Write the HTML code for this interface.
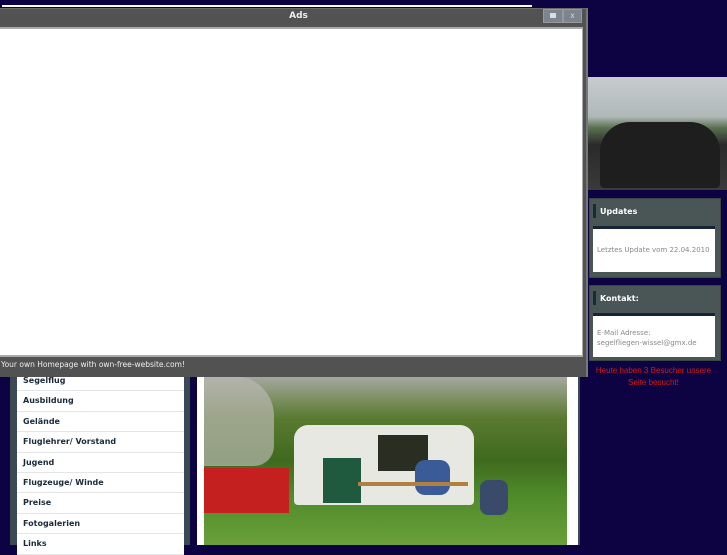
<!DOCTYPE html>
<html><head><meta charset="utf-8"><style>
body{margin:0;width:727px;height:545px;overflow:hidden;background:#0d0342;font-family:"Liberation Sans",sans-serif;position:relative}
.a{position:absolute}
.menu div{height:19.4px;border-bottom:1px solid #e4e6ea;background:#fff;font:bold 8px "DejaVu Sans",sans-serif;color:#1b2a3a;padding-left:6px;line-height:19px}
.box{background:#4a5555;border:1px solid #3a4545}
.hd{color:#fff;font:bold 8px "DejaVu Sans",sans-serif;position:absolute;left:10px;top:8px}
.bar{position:absolute;left:3px;top:5px;width:3px;height:14px;background:#1b2a3a}
.bd{position:absolute;left:3px;right:5px;background:#fff;border-top:3px solid #152536;font:7px "DejaVu Sans",sans-serif;color:#888}
</style></head><body>
<div class="a" style="left:2px;top:5px;width:530px;height:2px;background:#fff"></div>
<div class="a" style="left:10px;top:360px;width:180px;height:185px;background:#3b4a52"></div>
<div class="a menu" style="left:17px;top:370px;width:167px;border-top:1px solid #e4e6ea">
<div>Segelflug</div><div>Ausbildung</div><div>Gelände</div><div>Fluglehrer/ Vorstand</div><div>Jugend</div><div>Flugzeuge/ Winde</div><div>Preise</div><div>Fotogalerien</div><div>Links</div></div>
<div class="a" style="left:197px;top:360px;width:381px;height:185px;background:#fff;border-right:2px solid #3b4a52"></div>
<div class="a" style="left:204px;top:376px;width:363px;height:169px;background:linear-gradient(180deg,#a6a9a0 0%,#5a7a30 25%,#3f6a1e 50%,#4e8a2a 70%,#6aa03a 100%)"></div>
<div class="a" style="left:204px;top:376px;width:70px;height:90px;background:#b8b8b0;opacity:.7;border-radius:0 40px 20px 0"></div>
<div class="a" style="left:294px;top:425px;width:180px;height:80px;background:#e8e8e2;border-radius:14px 14px 4px 4px"></div>
<div class="a" style="left:323px;top:458px;width:38px;height:45px;background:#1f5a3e"></div>
<div class="a" style="left:378px;top:435px;width:50px;height:36px;background:#2a2e22"></div>
<div class="a" style="left:204px;top:468px;width:85px;height:45px;background:#c42020"></div>
<div class="a" style="left:415px;top:460px;width:35px;height:35px;background:#3a5a98;border-radius:10px"></div>
<div class="a" style="left:480px;top:480px;width:28px;height:35px;background:#3a4a6a;border-radius:8px"></div>
<div class="a" style="left:358px;top:482px;width:110px;height:4px;background:#b08040"></div>
<div class="a" style="left:588px;top:77px;width:139px;height:113px;background:linear-gradient(180deg,#c8ccd0 0%,#b0b8b8 35%,#5a7050 45%,#2a2a2a 60%,#3a3a3a 100%)"></div>
<div class="a" style="left:600px;top:122px;width:120px;height:66px;background:#1e1e1e;border-radius:30px 30px 4px 4px"></div>
<div class="a box" style="left:589px;top:198px;width:130px;height:78px"><div class="bar"></div><div class="hd">Updates</div>
<div class="bd" style="top:27px;height:43px"><div style="position:absolute;left:4px;top:17px;white-space:nowrap">Letztes Update vom 22.04.2010</div></div></div>
<div class="a box" style="left:589px;top:285px;width:130px;height:74px"><div class="bar"></div><div class="hd">Kontakt:</div>
<div class="bd" style="top:27px;height:41px"><div style="position:absolute;left:4px;top:12px;line-height:10px;white-space:nowrap">E-Mail Adresse:<br>segelfliegen-wissel@gmx.de</div></div></div>
<div class="a" style="left:588px;top:365px;width:131px;text-align:center;font:8px 'Liberation Sans',sans-serif;color:#d81818;line-height:12px">Heute haben 3 Besucher unsere Seite besucht!</div>
<div class="a" style="left:0;top:8px;width:586px;height:368px;background:#525252;border-right:2px solid #777;border-top:1px solid #6a6a6a"></div>
<div class="a" style="left:0;top:11px;width:597px;text-align:center;color:#eee;font:bold 9px 'DejaVu Sans',sans-serif">Ads</div>
<div class="a" style="left:543px;top:9px;width:18px;height:12px;background:#7b8590;border:1px solid #999"><div style="margin:3px 6px;width:6px;height:5px;background:#ddd"></div></div>
<div class="a" style="left:563px;top:9px;width:17px;height:12px;background:#7b8590;border:1px solid #999;color:#ddd;font:8px sans-serif;text-align:center;line-height:12px">x</div>
<div class="a" style="left:0;top:27px;width:582px;height:326px;background:#fff;border-top:2px solid #aaa;border-right:1px solid #aaa;border-bottom:2px solid #aaa"></div>
<div class="a" style="left:1px;top:360px;color:#eee;font:7.5px 'DejaVu Sans',sans-serif">Your own Homepage with own-free-website.com!</div>
</body></html>
